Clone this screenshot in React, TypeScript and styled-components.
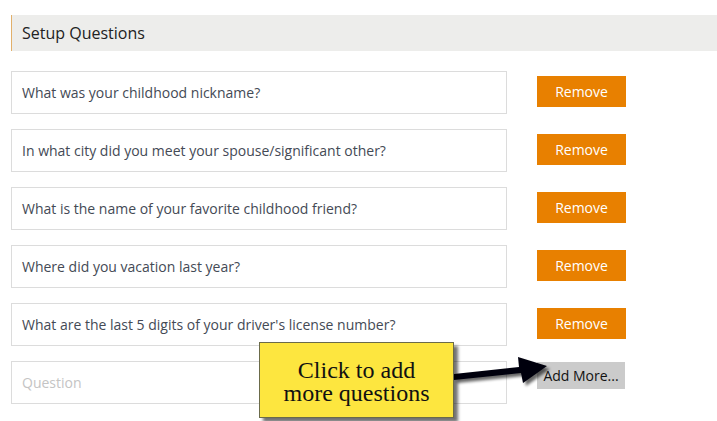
import React from "react";
import styled, { createGlobalStyle } from "styled-components";

const Global = createGlobalStyle`
  html, body { margin: 0; padding: 0; background: #fff; }
  body { font-family: "Open Sans", "Liberation Sans", sans-serif; }
`;

const Page = styled.div`
  padding: 15px 0 30px 11px;
  width: 717px;
  min-height: 421px;
  box-sizing: border-box;
`;

const Header = styled.div`
  height: 36px;
  background: #ededeb;
  border-left: 1px solid #e2b06a;
  display: flex;
  align-items: center;
  padding-left: 10px;
  font-size: 16px;
  color: #222;
  margin-bottom: 20px;
`;

const List = styled.div`
  display: flex;
  flex-direction: column;
  gap: 15px;
`;

const Row = styled.div`
  position: relative;
  display: flex;
  align-items: flex-start;
`;

const Field = styled.div<{ $placeholder?: boolean }>`
  width: 496px;
  height: 43px;
  box-sizing: border-box;
  border: 1px solid #dcdcdc;
  display: flex;
  align-items: center;
  padding-left: 10px;
  font-size: 14px;
  color: ${(p) => (p.$placeholder ? "#c4c4c4" : "#444a55")};
`;

const Button = styled.div<{ $variant: "remove" | "add" }>`
  margin-left: 30px;
  margin-top: ${(p) => (p.$variant === "remove" ? "5px" : "1px")};
  width: ${(p) => (p.$variant === "remove" ? "89px" : "88px")};
  height: ${(p) => (p.$variant === "remove" ? "31px" : "27px")};
  background: ${(p) => (p.$variant === "remove" ? "#e88000" : "#cbcbcb")};
  color: ${(p) => (p.$variant === "remove" ? "#fff" : "#111")};
  display: flex;
  align-items: center;
  justify-content: center;
  font-size: 14px;
`;

const Callout = styled.div`
  position: absolute;
  left: 248px;
  top: -19px;
  width: 195px;
  height: 76px;
  box-sizing: border-box;
  background: #fde63f;
  border: 1px solid #6b6b4a;
  box-shadow: 4px 4px 3px rgba(0, 0, 0, 0.55);
  display: flex;
  align-items: center;
  justify-content: center;
  text-align: center;
  font-family: "Liberation Serif", "Times New Roman", serif;
  font-size: 24px;
  line-height: 23px;
  color: #111;
  padding-top: 3px;
  z-index: 2;
`;

const Arrow = styled.svg`
  position: absolute;
  left: 440px;
  top: -8px;
  overflow: visible;
  z-index: 1;
`;

const questions = [
  "What was your childhood nickname?",
  "In what city did you meet your spouse/significant other?",
  "What is the name of your favorite childhood friend?",
  "Where did you vacation last year?",
  "What are the last 5 digits of your driver's license number?",
];

export default function App() {
  return (
    <>
      <Global />
      <Page>
        <Header>Setup Questions</Header>
        <List>
          {questions.map((q) => (
            <Row key={q}>
              <Field>{q}</Field>
              <Button $variant="remove">Remove</Button>
            </Row>
          ))}
          <Row>
            <Field $placeholder>Question</Field>
            <Button $variant="add">Add More...</Button>
            <Callout>
              Click to add
              <br />
              more questions
            </Callout>
            <Arrow width="100" height="40" viewBox="0 0 100 40">
              <defs>
                <filter id="sh" x="-20%" y="-40%" width="160%" height="200%">
                  <feGaussianBlur in="SourceAlpha" stdDeviation="1.6" />
                  <feOffset dx="3" dy="3" result="b" />
                  <feComponentTransfer>
                    <feFuncA type="linear" slope="0.6" />
                  </feComponentTransfer>
                  <feMerge>
                    <feMergeNode />
                    <feMergeNode in="SourceGraphic" />
                  </feMerge>
                </filter>
              </defs>
              <g filter="url(#sh)">
                <polygon
                  points="3,21 68,14 67,4 96,13 72,30 70,20 3,27"
                  fill="#05030f"
                />
              </g>
            </Arrow>
          </Row>
        </List>
      </Page>
    </>
  );
}
